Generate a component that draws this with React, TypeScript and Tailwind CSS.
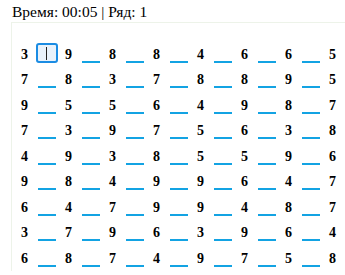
const rows: number[][] = [
  [3, 9, 8, 8, 4, 6, 6, 5],
  [7, 8, 3, 7, 8, 8, 9, 5],
  [9, 5, 5, 6, 4, 9, 8, 7],
  [7, 3, 9, 7, 5, 6, 3, 8],
  [4, 9, 3, 8, 5, 5, 9, 6],
  [9, 8, 4, 9, 9, 6, 4, 7],
  [6, 4, 7, 9, 9, 4, 8, 7],
  [3, 7, 9, 6, 3, 9, 6, 4],
  [6, 8, 7, 4, 9, 7, 5, 8],
];

function Blank({ active }: { active: boolean }) {
  return (
    <div className="w-[28px] h-full flex justify-center">
      {active ? (
        <div className="mt-[1.5px] w-[22px] h-[20px] rounded-[3px] border-2 border-[#1b8ce3] bg-[#e9f2fb] flex items-center justify-center">
          <span className="block w-[1px] h-[13px] bg-[#222]" />
        </div>
      ) : (
        <span className="block mt-[19px] w-[18px] h-[2px] bg-[#13a3e3]" />
      )}
    </div>
  );
}

export default function App() {
  return (
    <div className="w-[345px] h-[275px] overflow-hidden bg-white text-black pl-[11px] font-['Liberation_Serif','Times_New_Roman',serif]">
      <div className="pt-[3px] text-[15.5px] leading-[18px] pl-[1px]">Время: 00:05 | Ряд: 1</div>

      <div className="mt-[1px] border-l border-t border-[#edf3e9] pl-[4.5px] pt-[18.5px]">
        {rows.map((row, r) => (
          <div key={r} className="flex h-[25.5px] text-[14px] leading-[25.5px] font-bold">
            {row.map((d, i) => (
              <div key={i} className="flex h-full">
                <span className="w-[16px] text-center">{d}</span>
                {i < row.length - 1 && <Blank active={r === 0 && i === 0} />}
              </div>
            ))}
          </div>
        ))}
      </div>
    </div>
  );
}
